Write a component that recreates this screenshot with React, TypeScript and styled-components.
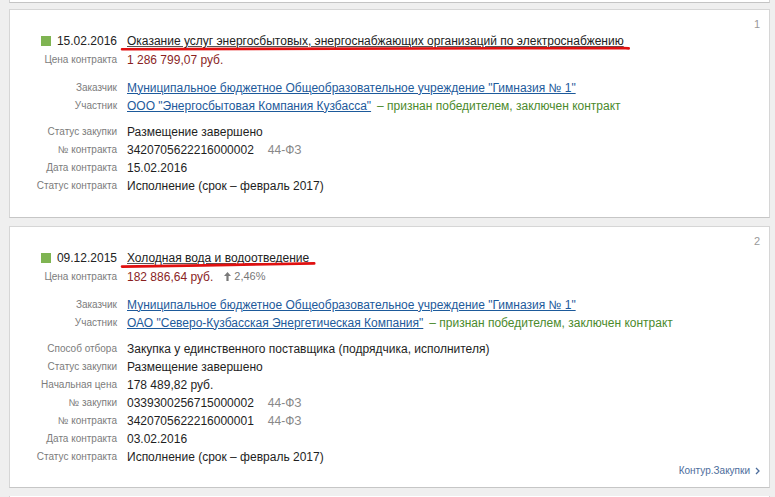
import React from "react";
import styled, { createGlobalStyle } from "styled-components";

const Global = createGlobalStyle`
  html, body { margin: 0; padding: 0; background: #efefef; }
  body { font-family: "Liberation Sans", Arial, sans-serif; color: #222; }
`;

const Page = styled.div`
  padding: 0 5px 0 9px;
  display: flex;
  flex-direction: column;
  gap: 8px;
`;

const Stub = styled.div`
  height: 2px;
  background: #fff;
  border: 1px solid #d3d3d3;
  border-top: none;
  border-bottom-color: #c4c4c4;
  margin-bottom: -2px;
`;

const Card = styled.section`
  position: relative;
  background: #fff;
  border: 1px solid #d6d6d6;
  border-bottom-color: #c6c6c6;
  padding: 22px 10px 23px 0;
  &:last-of-type { padding-bottom: 22px; }
`;

const Index = styled.span`
  position: absolute;
  top: 8px;
  right: 9px;
  font-size: 11px;
  color: #999;
`;

const Group = styled.div<{ $gap?: number }>`
  margin-top: ${(p) => p.$gap ?? 0}px;
`;

const Row = styled.div`
  display: grid;
  grid-template-columns: 107px 1fr;
  column-gap: 10px;
  align-items: center;
  height: 18px;
  line-height: 18px;
`;

const Label = styled.div`
  text-align: right;
  font-size: 10px;
  color: #7c7c7c;
  white-space: nowrap;
  padding-top: 1px;
`;

const HeadLabel = styled.div`
  display: flex;
  justify-content: flex-end;
  align-items: center;
  gap: 6px;
  font-size: 12px;
  color: #222;
`;

const Square = styled.span`
  width: 10px;
  height: 10px;
  background: #7fb452;
  display: inline-block;
`;

const Value = styled.div`
  font-size: 12px;
  color: #1e1e1e;
  white-space: nowrap;
`;

const TitleWrap = styled.span`
  position: relative;
  display: inline-block;
`;

const Title = styled.a`
  font-size: 12px;
  color: #222;
  text-decoration: underline;
  text-decoration-color: #555;
  text-underline-offset: 1px;
`;

const RedMark = styled.svg`
  position: absolute;
  left: -5px;
  bottom: -1px;
  width: calc(100% + 10px);
  height: 6px;
  overflow: visible;
  pointer-events: none;
`;

const Price = styled.span`
  font-size: 12px;
  color: #8a1f1f;
`;

const Delta = styled.span`
  margin-left: 11px;
  font-size: 11px;
  color: #777;
  display: inline-flex;
  align-items: center;
  gap: 3px;
`;

const Link = styled.a`
  color: #1d5a9b;
  text-decoration: underline;
`;

const Winner = styled.span`
  color: #4b8a2c;
  margin-left: 6px;
`;

const Law = styled.span`
  color: #888;
  margin-left: 14px;
`;

const Footer = styled.a`
  position: absolute;
  right: 9px;
  bottom: 10px;
  font-size: 10px;
  line-height: 12px;
  color: #4d6d9c;
  text-decoration: none;
  display: inline-flex;
  align-items: center;
  gap: 5px;
`;

type Field = { label: string; value: React.ReactNode };

type Item = {
  n: number;
  date: string;
  title: string;
  price: string;
  delta?: string;
  customer: string;
  participant: string;
  mark: { d: string; w: number };
  fields: Field[];
  footer?: boolean;
};

const Arrow = () => (
  <svg width="7" height="9" viewBox="0 0 7 9">
    <path d="M3.5 0 L7 4 L4.6 4 L4.6 9 L2.4 9 L2.4 4 L0 4 Z" fill="#7a7a7a" />
  </svg>
);

const num = (n: string) => (
  <>
    {n}
    <Law>44-ФЗ</Law>
  </>
);

const items: Item[] = [
  {
    n: 1,
    date: "15.02.2016",
    title:
      "Оказание услуг энергосбытовых, энергоснабжающих организаций по электроснабжению",
    price: "1 286 799,07 руб.",
    customer:
      'Муниципальное бюджетное Общеобразовательное учреждение "Гимназия № 1"',
    participant: 'ООО "Энергосбытовая Компания Кузбасса"',
    mark: { d: "M0 4.2 C 120 3.6, 300 3.2, 500 3 L 506 3.4", w: 506 },
    fields: [
      { label: "Статус закупки", value: "Размещение завершено" },
      { label: "№ контракта", value: num("3420705622216000002") },
      { label: "Дата контракта", value: "15.02.2016" },
      { label: "Статус контракта", value: "Исполнение (срок – февраль 2017)" },
    ],
  },
  {
    n: 2,
    date: "09.12.2015",
    title: "Холодная вода и водоотведение",
    price: "182 886,64 руб.",
    delta: "2,46%",
    customer:
      'Муниципальное бюджетное Общеобразовательное учреждение "Гимназия № 1"',
    participant: 'ОАО "Северо-Кузбасская Энергетическая Компания"',
    mark: { d: "M0 4.6 C 60 3.6, 140 2.6, 192 1.4", w: 192 },
    fields: [
      {
        label: "Способ отбора",
        value: "Закупка у единственного поставщика (подрядчика, исполнителя)",
      },
      { label: "Статус закупки", value: "Размещение завершено" },
      { label: "Начальная цена", value: "178 489,82 руб." },
      { label: "№ закупки", value: num("0339300256715000002") },
      { label: "№ контракта", value: num("3420705622216000001") },
      { label: "Дата контракта", value: "03.02.2016" },
      { label: "Статус контракта", value: "Исполнение (срок – февраль 2017)" },
    ],
    footer: true,
  },
];

const ContractCard = ({ item }: { item: Item }) => (
  <Card>
    <Index>{item.n}</Index>
    <Group>
      <Row>
        <HeadLabel>
          <Square />
          {item.date}
        </HeadLabel>
        <Value>
          <TitleWrap>
            <Title href="#">{item.title}</Title>
            <RedMark viewBox="0 0 100 6" preserveAspectRatio="none">
              <path
                d={item.mark.d}
                transform={`scale(${100 / item.mark.w},1)`}
                stroke="#e01010"
                strokeWidth="2.6"
                fill="none"
                strokeLinecap="round"
                vectorEffect="non-scaling-stroke"
              />
            </RedMark>
          </TitleWrap>
        </Value>
      </Row>
      <Row>
        <Label>Цена контракта</Label>
        <Value>
          <Price>{item.price}</Price>
          {item.delta && (
            <Delta>
              <Arrow />
              {item.delta}
            </Delta>
          )}
        </Value>
      </Row>
    </Group>
    <Group $gap={10}>
      <Row>
        <Label>Заказчик</Label>
        <Value>
          <Link href="#">{item.customer}</Link>
        </Value>
      </Row>
      <Row>
        <Label>Участник</Label>
        <Value>
          <Link href="#">{item.participant}</Link>
          <Winner>– признан победителем, заключен контракт</Winner>
        </Value>
      </Row>
    </Group>
    <Group $gap={8}>
      {item.fields.map((f) => (
        <Row key={f.label}>
          <Label>{f.label}</Label>
          <Value>{f.value}</Value>
        </Row>
      ))}
    </Group>
    {item.footer && (
      <Footer href="#">
        Контур.Закупки
        <svg width="5" height="8" viewBox="0 0 5 8">
          <path d="M1 1 L4 4 L1 7" stroke="#4d6d9c" strokeWidth="1.3" fill="none" />
        </svg>
      </Footer>
    )}
  </Card>
);

export default function App() {
  return (
    <>
      <Global />
      <Page>
        <Stub />
        {items.map((it) => (
          <ContractCard key={it.n} item={it} />
        ))}
        <Stub />
      </Page>
    </>
  );
}
